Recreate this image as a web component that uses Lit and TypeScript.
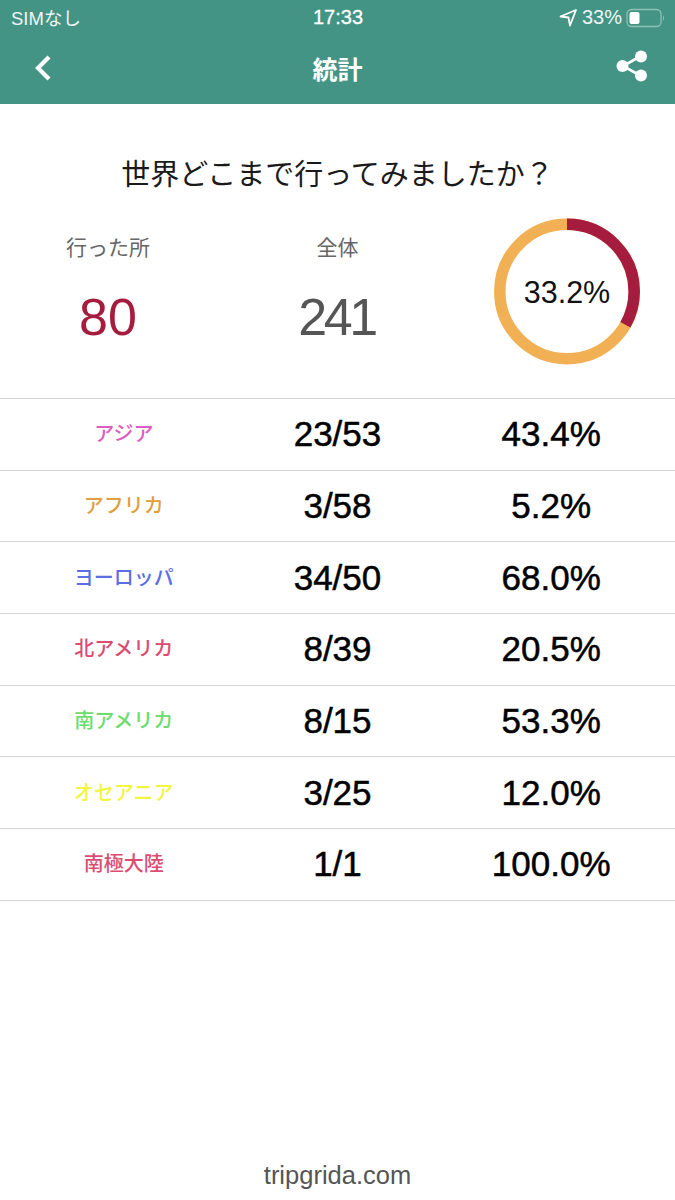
import { LitElement, html, css } from "lit";
import { customElement } from "lit/decorators.js";

const ROWS = [
  { name: "アジア", color: "#dc5cc0", count: "23/53", pct: "43.4%" },
  { name: "アフリカ", color: "#e0a040", count: "3/58", pct: "5.2%" },
  { name: "ヨーロッパ", color: "#5c6ee6", count: "34/50", pct: "68.0%" },
  { name: "北アメリカ", color: "#dc4c72", count: "8/39", pct: "20.5%" },
  { name: "南アメリカ", color: "#6cdc6c", count: "8/15", pct: "53.3%" },
  { name: "オセアニア", color: "#f2f540", count: "3/25", pct: "12.0%" },
  { name: "南極大陸", color: "#dc4c72", count: "1/1", pct: "100.0%" },
];

@customElement("app-root")
export class AppRoot extends LitElement {
  static styles = css`
    :host {
      display: block;
      width: 675px;
      height: 1200px;
      background: #fff;
      font-family: "Liberation Sans", "Noto Sans CJK JP", sans-serif;
      color: #000;
    }
    .page { display: flex; flex-direction: column; height: 1200px; }
    .header { background: #439485; height: 104px; color: #fff; flex: none; display: flex; flex-direction: column; }
    .status { height: 35px; display: grid; grid-template-columns: 1fr auto 1fr; align-items: center; padding: 0 10px 0 11px; font-size: 18.5px; color: #eef6f4; }
    .sim { padding-bottom: 2px; }
    .time { font-size: 20px; color: #fff; -webkit-text-stroke: 0.3px #fff; }
    .status-right { display: flex; justify-content: flex-end; align-items: center; gap: 4px; font-size: 20px; }
    .nav { flex: 1; display: grid; grid-template-columns: 1fr auto 1fr; align-items: center; padding: 0 26px 4px; }
    .title { font-size: 25px; font-weight: 700; color: #fff; }
    .share { justify-self: end; display: block; margin-bottom: 3px; }
    .back { display: block; margin-left: 7px; }
    .heading { text-align: center; font-size: 29px; line-height: 40px; margin-top: 51px; color: #1a1a1a; font-weight: 400; }
    .stats { display: grid; grid-template-columns: 1fr 243px 1fr; margin-top: 23px; height: 180px; }
    .stat { display: flex; flex-direction: column; align-items: center; }
    .stat-label { font-size: 21px; line-height: 30px; color: #666; margin-top: 15px; }
    .stat-num { font-size: 52px; line-height: 56px; margin-top: 26px; color: #555; }
    .stat-num.tight { letter-spacing: -3.5px; padding-right: 2px; }
    .stat-num.red { color: #a51c3f; }
    .donut { position: relative; width: 146px; height: 147px; justify-self: center; }
    .donut svg { display: block; }
    .donut span { position: absolute; inset: 0 0 -2px; display: flex; align-items: center; justify-content: center; font-size: 30.5px; color: #111; }
    .table { border-top: 1px solid #d4d4d4; }
    .row { height: 70.7px; border-bottom: 1px solid #d4d4d4; display: grid; grid-template-columns: repeat(3, 1fr); padding: 0 17px; align-items: center; text-align: center; }
    .name { font-size: 20px; font-weight: 500; padding-bottom: 3px; }
    .count, .pct { font-size: 35px; -webkit-text-stroke: 0.5px #000; color: #000; }
    .footer { margin-top: auto; text-align: center; font-size: 25.5px; color: #555; padding-bottom: 10px; }
  `;

  render() {
    const r = 67.2;
    const c = 2 * Math.PI * r;
    return html`
      <div class="page">
        <div class="header">
          <div class="status">
            <span class="sim">SIMなし</span>
            <span class="time">17:33</span>
            <span class="status-right">
              <svg width="19" height="19" viewBox="0 0 19 19"><path d="M17 2 1.5 8.5 9.5 9.5 11 17.5Z" fill="none" stroke="#fff" stroke-width="1.8" stroke-linejoin="round"/></svg>
              <span>33%</span>
              <svg width="39" height="20" viewBox="0 0 39 20"><rect x="1" y="1.5" width="34" height="17" rx="4.5" fill="none" stroke="#8fc0b6" stroke-width="1.3"/><rect x="3.5" y="4" width="10" height="12" rx="2" fill="#fff"/><path d="M37 7.5c1.3.4 1.5 4.5 0 5z" fill="#8fc0b6"/></svg>
            </span>
          </div>
          <div class="nav">
            <svg class="back" width="20" height="28" viewBox="0 0 20 28"><path d="M16 3 5 14 16 25" fill="none" stroke="#fff" stroke-width="4.2"/></svg>
            <span class="title">統計</span>
            <svg class="share" width="34" height="34" viewBox="0 0 34 34"><path d="M26 7 8 17 26 27" fill="none" stroke="#fff" stroke-width="2.6"/><circle cx="26" cy="7.5" r="6" fill="#fff"/><circle cx="7.5" cy="17" r="6" fill="#fff"/><circle cx="26" cy="26.5" r="6" fill="#fff"/></svg>
          </div>
        </div>
        <div class="heading">世界どこまで行ってみましたか？</div>
        <div class="stats">
          <div class="stat"><span class="stat-label">行った所</span><span class="stat-num red">80</span></div>
          <div class="stat"><span class="stat-label">全体</span><span class="stat-num tight">241</span></div>
          <div class="donut">
            <svg width="146" height="147" viewBox="0 0 146 147">
              <g transform="rotate(-90 73 73.5)" fill="none" stroke-width="11.5">
                <circle cx="73" cy="73.5" r="${r}" stroke="#f2b055"/>
                <circle cx="73" cy="73.5" r="${r}" stroke="#a51c3f" stroke-dasharray="${c * 0.332} ${c}"/>
              </g>
            </svg>
            <span>33.2%</span>
          </div>
        </div>
        <div class="table">
          ${ROWS.map(
            (x) => html`<div class="row">
              <span class="name" style="color:${x.color}">${x.name}</span>
              <span class="count">${x.count}</span>
              <span class="pct">${x.pct}</span>
            </div>`
          )}
        </div>
        <div class="footer">tripgrida.com</div>
      </div>
    `;
  }
}
